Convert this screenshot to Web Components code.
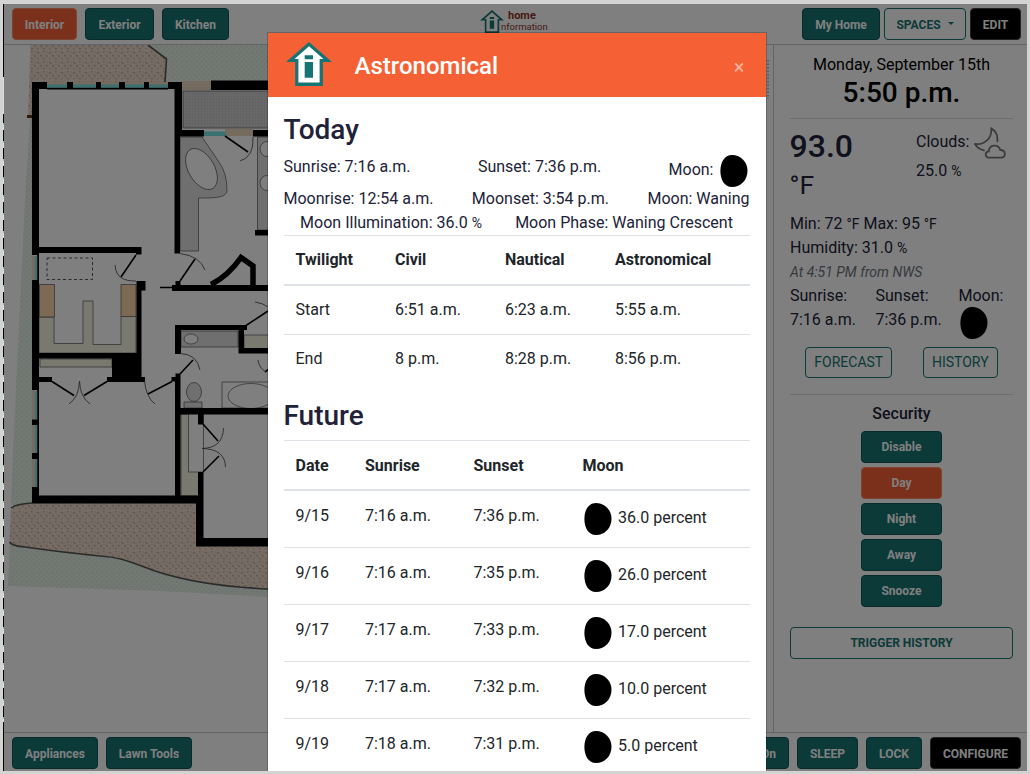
<!DOCTYPE html>
<html lang="en">
<head>
<meta charset="utf-8">
<title>Home Information</title>
<style>
  html, body { margin: 0; padding: 0; }
  body { width: 1030px; height: 774px; overflow: hidden; background: #d3d3d3; font-family: Roboto, "Liberation Sans", sans-serif; font-size: 16px; line-height: 24px; color: #212238; }
</style>
</head>
<body>
<home-app></home-app>
<script>
const define = (name, html) => {
  const t = document.createElement('template');
  t.innerHTML = html;
  customElements.define(name, class extends HTMLElement {
    constructor() {
      super();
      this.attachShadow({ mode: 'open' }).appendChild(t.content.cloneNode(true));
    }
  });
};

define('hi-button', `
<style>
  :host { display: flex; box-sizing: border-box; flex: none; height: 32px; align-items: center; justify-content: center; border: 1px solid #0c5655; border-radius: 4px; background: #167473; color: #fff; font-size: 12px; font-weight: 700; line-height: 18px; white-space: nowrap; padding-top: var(--button-drop, 0); }
  :host([kind="active"]) { background: #f56035; border-color: #ff8a68; }
  :host([kind="dark"]) { background: #000; border-color: #444; }
  :host([kind="outline"]) { background: transparent; border-color: #167473; color: #167473; }
  :host([kind="soft"]) { height: 31px; padding-bottom: 2px; background: transparent; border-color: #167473; color: #167473; font-size: 14px; font-weight: 400; }
</style><slot></slot>`);

define('hi-house', `
<style>:host { display: block; flex: none; } svg { display: block; width: 100%; height: 100%; }</style>
<svg viewBox="0 0 46 44" preserveAspectRatio="none">
  <path fill="#167473" d="M23 0L46 20H36.9V44H9.2V20H0z"/>
  <path fill="#fff" d="M23 4.3L37.5 17H33.6V40.6H12.4V17H8.5z"/>
  <path fill="#167473" d="M18.7 13.3h8.3v4h-8.3zM18.7 20h8.3v15.7h-8.3z"/>
</svg>`);

define('hi-moon', `
<style>:host { display: block; flex: none; width: 28px; height: 32px; } svg { display: block; }</style>
<svg width="28" height="32" viewBox="0 0 28 32"><path d="M12 0C21 0 27.5 7.5 27.5 15.5C27.5 25 21 32 12 32C4.500 32 .4 25 .4 16C.4 7 4.500 0 12 0z"/></svg>`);

define('hi-cloud-moon', `
<style>:host { display: block; flex: none; width: 32px; height: 32px; } svg { display: block; }</style>
<svg width="32" height="32" viewBox="0 0 32 32" fill="none" stroke="#777" stroke-width="1.8" stroke-linejoin="round" stroke-linecap="round">
  <path d="M10 23.300C6 22.500 2.800 20 .8 17C10 18.500 18.500 11 17.200 1.200C22 4 24 9 23.300 14.300"/>
  <path d="M14.800 30.600C10.600 30.600 10.700 24.700 14.800 24.400C15 17.200 24.500 16.700 26.200 23C32 22.700 32.400 30.600 27.300 30.600z"/>
</svg>`);

define('hi-top-bar', `
<style>
  :host { --button-drop: 1px; display: flex; box-sizing: border-box; height: 41px; padding: 4px 6px 4px 8px; border-bottom: 1px solid #c8c8c8; }
  .places { display: flex; gap: 8px; width: 468px; }
  .brand { display: flex; flex: 1; padding-top: 2px; color: #8c3424; }
  .brand hi-house { width: 24px; height: 23px; }
  .words { display: grid; grid-template-rows: 12px 11px; align-content: start; margin-left: -3px; }
  .home { font-size: 11px; font-weight: 700; line-height: 12px; padding-left: 7px; }
  .info { font-size: 9.500px; line-height: 10px; }
  .tools { display: flex; gap: 4px; }
  .caret { margin: -3px 0 0 7px; border: 3.500px solid transparent; border-top-color: #167473; border-bottom: 0; }
</style>
<div class="places">
  <hi-button kind="active" style="width:65px">Interior</hi-button>
  <hi-button style="width:69px">Exterior</hi-button>
  <hi-button style="width:67px">Kitchen</hi-button>
</div>
<div class="brand"><hi-house></hi-house><div class="words"><span class="home">home</span><span class="info">nformation</span></div></div>
<div class="tools">
  <hi-button style="width:78px">My Home</hi-button>
  <hi-button kind="outline" style="width:82px">SPACES<span class="caret"></span></hi-button>
  <hi-button kind="dark" style="width:51px">EDIT</hi-button>
</div>`);

define('hi-bottom-bar', `
<style>
  :host { --button-drop: 1px; display: flex; box-sizing: border-box; height: 39px; padding: 4px 6px 0 8px; gap: 8px; border-top: 1px solid #c8c8c8; }
  .gap { flex: 1; }
  .last { justify-content: flex-end; padding-right: 12px; width: 60px; }
</style>
<hi-button style="width:86px">Appliances</hi-button>
<hi-button style="width:86px">Lawn Tools</hi-button>
<span class="gap"></span>
<hi-button class="last">On</hi-button>
<hi-button style="width:61px">SLEEP</hi-button>
<hi-button style="width:56px">LOCK</hi-button>
<hi-button kind="dark" style="width:91px">CONFIGURE</hi-button>`);

define('hi-floor-plan', `
<style>:host { display: block; } svg { display: block; }</style>
<svg width="769" height="687" viewBox="4 45 769 687">
  <defs>
    <pattern id="stone" width="12" height="10" patternUnits="userSpaceOnUse">
      <rect width="12" height="10" fill="#ebdacb"/>
      <path fill="#c9ab9b" d="M1 2h2v1.500h-2zM7 1h1.500v1.500h-1.500zM4 5h2.200v1.500h-2.200zM10 5h1.500v2h-1.500zM1 8h1.500v1.200h-1.500zM7 8h2v1.300h-2z"/>
      <path fill="#dcc8b8" d="M3 3h2v1h-2zM8 4h2v1h-2zM5 7h2v1h-2zM11 1h1v2h-1z"/>
    </pattern>
    <pattern id="grass" width="5" height="5" patternUnits="userSpaceOnUse">
      <rect width="5" height="5" fill="#e6f1e9"/><path fill="#c0e2c8" d="M1 1h1.300v1.200h-1.300zM3.500 3.500h1.200v1.200h-1.200z"/>
    </pattern>
    <pattern id="tile" width="3" height="3" patternUnits="userSpaceOnUse">
      <rect width="3" height="3" fill="#d2d2d2"/><path fill="#c8c8c8" d="M0 0h1v3h-1zM1 0h2v1h-2z"/>
    </pattern>
  </defs>
  <path fill="url(#grass)" d="M148 45H268V82H164V58zM30 118H33V505H11L14 430L25 200zM10 540L100 555L150 568L268 588V597L160 591L8 586z"/>
  <path fill="#fff" d="M39 89H268V540H203V496H39z"/>
  <path fill="url(#stone)" d="M30.500 45H148L166.500 59L165 82H32V117H28zM11 508Q16 504 32 503H196V546H268V589Q200 586 155 571C130 562 120 557 100 556Q60 553 25 547Q12 546 9.500 541z"/>
  <path fill="none" stroke="#555" stroke-width="1.600" d="M148 45L166.500 59L165 82M11 508Q16 504 32 503M9.500 542Q12 546 25 547Q60 552 100 556C120 557 130 562 155 571Q200 586 268 589"/>
  <path fill="#5a3514" d="M27 115h6v3h-6z"/>
  <path fill="#e9d6bd" d="M46 82h122v4H46zM182 81h29v9h-29zM225 129h28v7h-28zM32 256h3v24h-3zM32 390h3v98h-3z"/>

  <g stroke="#555" stroke-width=".7">
    <path fill="url(#tile)" d="M183 91h90v37h-90z"/>
    <path fill="#dedede" d="M180 137H202L219 162Q227 173 227 190C227 198 215 198 198.500 198V251H180zM257.500 137h14v93h-14zM181 331h57v16h-57zM184 402h18v6h-18z"/>
    <ellipse cx="201.500" cy="169" rx="13" ry="22.500" fill="#fff" transform="rotate(-30 201.500 169)"/>
    <ellipse cx="267" cy="149" rx="7" ry="7.500" fill="#fff"/><ellipse cx="267" cy="183" rx="7" ry="7.500" fill="#fff"/>
    <ellipse cx="191" cy="339" rx="7" ry="5" fill="#fff"/>
    <ellipse cx="194" cy="392" rx="7.500" ry="9.500" fill="#dedede"/>
    <path fill="#fff" d="M222 382h60v26h-60z"/><ellipse cx="251" cy="396" rx="23" ry="12.500" fill="#fff"/>
    <path fill="#f4f2df" d="M39 317H54V343.500H83V301H93V344.500H121V316H136V353H39zM40 359h72v8H40zM244 335h30v14h-30zM181 414h18v82h-18z"/>
    <path fill="#fff" d="M188.500 413h15v59h-15z"/>
    <path fill="#fad5a9" d="M39.500 284.500h15v32.500h-15zM121 284.500h15v32h-15z"/>
    <path fill="none" stroke-dasharray="3 2.500" stroke-width="1" d="M47 258h45.500v21.500H47z"/>
  </g>

  <path fill="#000" d="M32 82H47V89H32zM67 82h6v7h-6zM96 82h5v7h-5zM119 82h6v7h-6zM144 82h5v7h-5zM168 82h14v7h-14zM47 87.500H168V89.500H47zM211 80.500h57v9.500h-57zM32 82h7v173h-7zM37 255h2v26h-2zM32 280h7v110h-7zM37 390h2v100h-2zM32 419.500h7v5.500h-7zM32 453h7v6h-7zM32 487h7v16h-7zM32 495.500H203V503.500H32zM174.500 82h7.500v50h-7.500zM174.500 130H204V136.500H180V253.500H174.500zM253 130h15v6.500h-15zM39 247H141.500V254.500H136V253H39zM136.500 281h9v9.500h-4V382H112V358.500H39V353H136.500zM39 377h13v5H39zM107 377h38v5h-38zM175.500 281h5v4H268V291H172V285h3.500zM255 230h13v5.500h-13zM175 325H247V330H244V348H268V353.500H238.500V330H181V354H175zM175.500 373.500h5V408H268V414.500H203.500V424.500H198V414.500H180.500V496H175V381.500H171.500V377h4zM198 472h5.500V538H268V546.500H196V500h2z"/>
  <path fill="#74e2e4" d="M47 84.500h20v3H47zM73 84.500h23v3H73zM101 84.500h18v3h-18zM125 84.500h19v3h-19zM149 84.500h19v3h-19zM204 131.500h21.500v4.500H204zM35 256h2.300v24H35zM35 391h2.300v28H35zM35 425h2.300v28H35zM35 459h2.300v28H35z"/>
  <path fill="none" stroke="#000" stroke-width="5.500" d="M211 284.500Q228 276 241 257.500L253 266V286"/>
  <path fill="none" stroke="#000" stroke-width="1.600" d="M225 136L248 152M136 255L121 277M180 281L195 259M160 287.500H173M246 325.500L268 311M180 374L193 360M52 381.500L74 395.500M107 381.500L84 395.500M172 381.500L148 394M203 424L218 441M203 472L219 456M265 372l4-3"/>
  <path fill="none" stroke="#555" stroke-width=".9" d="M253 137Q254 157 240 161M115 265C116 278 124 281 136 281M180 253.500Q200 256 205 270M255 302Q263 303 268 307M180 353.500Q197 354 200 370M258 360Q259 368 266 372M79.500 381Q79 397 69 404M79.500 381Q80 397 90 404M144.500 381Q146 397 155 404M223.500 428Q223 448 202 448.500Q225 449 225.500 467"/>
  <path fill="none" stroke="#bbb" stroke-width="2" stroke-dasharray="1.500 2" d="M768 60V99"/>
</svg>`);

define('hi-sidebar', `
<style>
  :host { display: flex; flex-direction: column; box-sizing: border-box; width: 254px; padding: 8px 14px 0 16px; border-left: 1px solid #c8c8c8; }
  .date, .time { color: #000; text-align: center; }
  .time { font-size: 28px; font-weight: 500; line-height: 33px; margin-top: -1px; }
  .rule { height: 1px; background: #dcdcdc; }
  .now { display: grid; grid-template-columns: 126px 1fr; margin-top: 8px; height: 85px; }
  .temp { font-size: 32px; font-weight: 500; line-height: 38.400px; margin-left: -.5px; }
  .temp small { display: block; font-weight: 400; font-size: 26.500px; line-height: 40px; }
  small { font-size: 14px; line-height: 0; }
  .sky { display: flex; gap: 5px; line-height: 29px; }
  .note { font-size: 14px; font-style: italic; color: #6c757d; }
  .sun { display: grid; grid-template-columns: 85.500px 83px auto; height: 55px; }
  .row { display: flex; justify-content: space-around; margin-top: 8px; margin-bottom: 16px; }
  .title { font-weight: 500; text-align: center; margin: 7px 0 5px; }
  .modes { display: flex; flex-direction: column; align-items: center; gap: 4px; margin-bottom: 20px; }
  .modes hi-button { width: 81px; }
  .line { white-space: pre; }
</style>
<div class="date">Monday, September 15th</div>
<div class="time">5:50 p.m.</div>
<div class="rule" style="margin-top:9px"></div>
<div class="now">
  <div class="temp">93.0<small>°F</small></div>
  <div><div class="sky">Clouds:<hi-cloud-moon></hi-cloud-moon></div><div>25.0 <small>%</small></div></div>
</div>
<div class="line">Min: 72 <small>°F</small> Max: 95 <small>°F</small></div>
<div>Humidity: 31.0 <small>%</small></div>
<div class="note">At 4:51 PM from NWS</div>
<div class="sun">
  <div>Sunrise:<br>7:16 a.m.</div><div>Sunset:<br>7:36 p.m.</div><div>Moon:<hi-moon style="margin:-1px 0 0 1px"></hi-moon></div>
</div>
<div class="row"><hi-button kind="soft" style="width:87px">FORECAST</hi-button><hi-button kind="soft" style="width:75px">HISTORY</hi-button></div>
<div class="rule"></div>
<div class="title">Security</div>
<div class="modes">
  <hi-button>Disable</hi-button><hi-button kind="active">Day</hi-button><hi-button>Night</hi-button><hi-button>Away</hi-button><hi-button>Snooze</hi-button>
</div>
<hi-button kind="outline">TRIGGER HISTORY</hi-button>`);

define('hi-astro-dialog', `
<style>
  :host { display: block; box-sizing: border-box; width: 498px; background: #fff; overflow: hidden; box-shadow: 0 0 0 1px rgba(0,0,0,.2); }
  header { display: flex; align-items: center; height: 64px; background: #f56035; color: #fff; padding: 0 21.500px 0 18px; }
  header hi-house { width: 46px; height: 44px; margin: -2px 22.500px 0 0; }
  .title { flex: 1; font-size: 24px; font-weight: 500; line-height: 36px; padding-top: 1px; }
  .close { font-size: 20px; line-height: 24px; color: rgba(255,255,255,.55); padding-top: 3px; }
  main { padding: 16px; }
  h3 { margin: 0 0 0 -.5px; font-size: 28px; font-weight: 500; line-height: 33.600px; height: 33px; }
  .facts { display: flex; justify-content: space-between; margin: 0 .5px 0 -.5px; }
  .first { height: 32px; margin-top: 9px; }
  .second { height: 24px; }
  .third { height: 24px; justify-content: space-around; }
  .phase { display: flex; gap: 7px; line-height: 30px; }
  .phase hi-moon { margin-right: 1px; }
  small { font-size: 14px; line-height: 0; }
  .table { color: #212529; }
  .table > div { display: grid; box-sizing: border-box; height: 49px; padding: 12px 0 0 11.500px; border-top: 1px solid #dee2e6; }
  .table > .head { height: 51px; border-bottom: 2px solid #dee2e6; font-weight: 700; }
  .table > .head + div { border-top: 0; height: 48px; }
  .twilight > div { grid-template-columns: 99.500px 110px 110px auto; }
  .table.future > div { height: 57px; grid-template-columns: 69.500px 108.500px 109px auto; padding-top: 13px; }
  .table.future > .head { height: 51px; }
  .table.future > .head + div { height: 56px; }
  .moon { display: flex; gap: 6px; line-height: 28px; padding-left: 1.500px; }
  .moon hi-moon { margin-top: -1px; }
</style>
<header><hi-house></hi-house><div class="title">Astronomical</div><div class="close">×</div></header>
<main>
  <h3>Today</h3>
  <div class="facts first"><span>Sunrise: 7:16 a.m.</span><span>Sunset: 7:36 p.m.</span><span class="phase">Moon:<hi-moon></hi-moon></span></div>
  <div class="facts second"><span>Moonrise: 12:54 a.m.</span><span>Moonset: 3:54 p.m.</span><span>Moon: Waning</span></div>
  <div class="facts third"><span>Moon Illumination: 36.0 <small>%</small></span><span>Moon Phase: Waning Crescent</span></div>
  <div class="table twilight">
    <div class="head"><span>Twilight</span><span>Civil</span><span>Nautical</span><span>Astronomical</span></div>
    <div><span>Start</span><span>6:51 a.m.</span><span>6:23 a.m.</span><span>5:55 a.m.</span></div>
    <div><span>End</span><span>8 p.m.</span><span>8:28 p.m.</span><span>8:56 p.m.</span></div>
  </div>
  <h3 style="margin-top:16px;margin-bottom:8px">Future</h3>
  <div class="table future">
    <div class="head"><span>Date</span><span>Sunrise</span><span>Sunset</span><span>Moon</span></div>
    <div><span>9/15</span><span>7:16 a.m.</span><span>7:36 p.m.</span><span class="moon"><hi-moon></hi-moon>36.0 percent</span></div>
    <div><span>9/16</span><span>7:16 a.m.</span><span>7:35 p.m.</span><span class="moon"><hi-moon></hi-moon>26.0 percent</span></div>
    <div><span>9/17</span><span>7:17 a.m.</span><span>7:33 p.m.</span><span class="moon"><hi-moon></hi-moon>17.0 percent</span></div>
    <div><span>9/18</span><span>7:17 a.m.</span><span>7:32 p.m.</span><span class="moon"><hi-moon></hi-moon>10.0 percent</span></div>
    <div><span>9/19</span><span>7:18 a.m.</span><span>7:31 p.m.</span><span class="moon"><hi-moon></hi-moon>5.0 percent</span></div>
  </div>
</main>`);

define('home-app', `
<style>
  :host { display: flex; box-sizing: border-box; width: 1030px; height: 774px; padding: 4px 3px 3px; overflow: hidden; }
  /* sliver of the window behind the left edge */
  .edge { flex: none; width: 1px; background: linear-gradient(#000 73px, #ddd 73px, #ddd 110px, transparent 110px, transparent 718px, #000 718px), repeating-linear-gradient(#000 0 11px, #8fd0a0 11px 13px, #ddd 13px 18px); }
  .screen { position: relative; display: flex; flex-direction: column; flex: 1; height: 767px; background: #fff; overflow: hidden; }
  .middle { display: flex; flex: 1; min-height: 0; }
  hi-floor-plan { flex: 1; }
  .backdrop { position: absolute; inset: 0; background: rgba(0,0,0,.5); }
  hi-astro-dialog { position: absolute; left: 264px; top: 29px; height: 760px; }
</style>
<div class="edge"></div>
<div class="screen">
  <hi-top-bar></hi-top-bar>
  <div class="middle"><hi-floor-plan></hi-floor-plan><hi-sidebar></hi-sidebar></div>
  <hi-bottom-bar></hi-bottom-bar>
  <div class="backdrop"></div>
  <hi-astro-dialog></hi-astro-dialog>
</div>`);
</script>
</body>
</html>
